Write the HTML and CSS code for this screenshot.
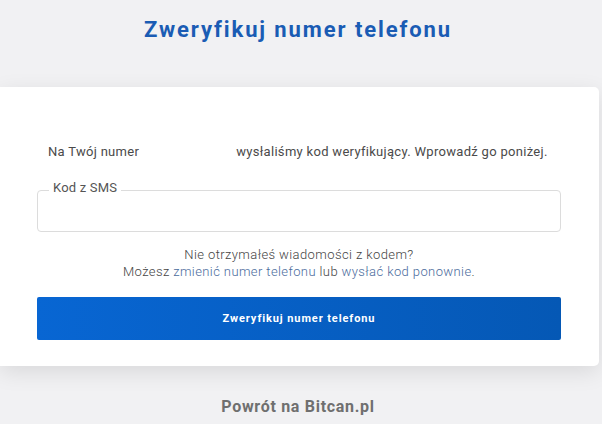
FILE: index.html
```html
<!DOCTYPE html>
<html lang="pl">
<head>
<meta charset="utf-8">
<title>Zweryfikuj numer telefonu</title>
<link rel="stylesheet" href="styles.css">
</head>
<body>
<div class="page">
  <h1 class="title">Zweryfikuj numer telefonu</h1>
  <div class="card">
    <p class="info">Na Twój numer <span class="phone"></span> wysłaliśmy kod weryfikujący. Wprowadź go poniżej.</p>
    <div class="field">
      <span class="legend">Kod z SMS</span>
      <input class="input" type="text" aria-label="Kod z SMS">
    </div>
    <p class="help">Nie otrzymałeś wiadomości z kodem?<br>Możesz <a class="link" href="#">zmienić numer telefonu</a> lub <a class="link" href="#">wysłać kod ponownie</a>.</p>
    <button class="btn" type="button">Zweryfikuj numer telefonu</button>
  </div>
  <a class="back" href="#">Powrót na Bitcan.pl</a>
</div>
</body>
</html>
```

FILE: styles.css
```css
html, body {
  margin: 0;
  padding: 0;
  background: #f1f1f3;
  font-family: Roboto, "Liberation Sans", sans-serif;
}

.page {
  display: flex;
  flex-direction: column;
  align-items: center;
  width: 602px;
}

.title {
  margin: 17px 0 0 0;
  padding-right: 6px;
  height: 70px;
  font-size: 22px;
  font-weight: 700;
  letter-spacing: 1.9px;
  color: #1a5cb4;
  line-height: 26px;
}

.card {
  box-sizing: border-box;
  align-self: flex-start;
  width: 599px;
  background: #fff;
  border-radius: 0 5px 5px 0;
  box-shadow: 0 6px 22px rgba(0, 0, 0, 0.10);
  padding: 56px 38px 26px 37px;
}

.info {
  margin: 0 0 0 11px;
  font-size: 13px;
  line-height: 18px;
  letter-spacing: 0.3px;
  color: #4a4a4a;
  white-space: nowrap;
}

.phone {
  display: inline-block;
  width: 90px;
}

.field {
  position: relative;
  margin-top: 29px;
  border: 1px solid #dcdcdc;
  border-radius: 4px;
  height: 42px;
  box-sizing: border-box;
}

.legend {
  position: absolute;
  left: 11px;
  top: -11px;
  padding: 0 4px;
  background: #fff;
  font-size: 13px;
  line-height: 16px;
  letter-spacing: 0.2px;
  color: #555;
}

.input {
  display: block;
  width: 100%;
  height: 100%;
  border: 0;
  outline: none;
  background: transparent;
  box-sizing: border-box;
}

.help {
  margin: 14px 0 0 0;
  text-align: center;
  font-size: 13px;
  line-height: 17px;
  letter-spacing: 0.4px;
  color: #444;
  font-weight: 300;
}

.link {
  color: #4a6b9c;
  text-decoration: none;
}

.btn {
  display: block;
  margin-top: 17px;
  width: 100%;
  height: 43px;
  border: 0;
  border-radius: 2px;
  background: linear-gradient(90deg, #0866d3 0%, #0558b5 100%);
  color: #fff;
  font-family: Roboto, "Liberation Sans", sans-serif;
  font-size: 11px;
  font-weight: 700;
  letter-spacing: 0.9px;
}

.back {
  margin-top: 31px;
  padding-right: 6px;
  font-size: 16px;
  font-weight: 700;
  letter-spacing: 0.7px;
  color: #6f6f6f;
  text-decoration: none;
}
```
